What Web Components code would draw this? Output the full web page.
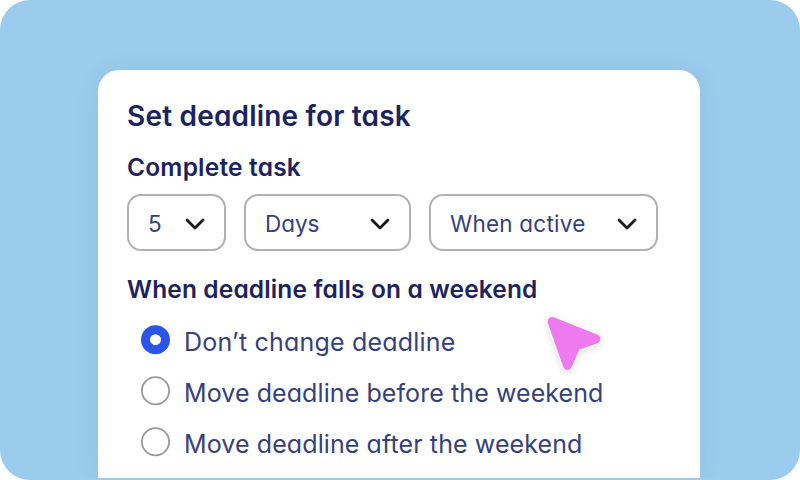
<!DOCTYPE html>
<html lang="en">
<head>
<meta charset="utf-8">
<title>Set deadline for task</title>
<style>
    body {
        margin: 0;
        background: #fff;
        font-family: Inter, "Liberation Sans", sans-serif;
        font-feature-settings: "cv11";
    }
</style>
</head>
<body>

<template id="page-template">
    <style>
        :host {
            display: flex;
            justify-content: center;
            position: relative;
            box-sizing: border-box;
            width: 800px;
            height: 480px;
            padding: 70px 2px 2px 0;
            border-radius: 30px;
            background: #9bcbed;
            overflow: hidden;
        }
    </style>
    <slot></slot>
</template>

<template id="card-template">
    <style>
        :host {
            display: block;
            box-sizing: border-box;
            width: 602px;
            height: 408px;
            padding: 29px 29px 0;
            border-radius: 21px 21px 0 0;
            background: #fff;
            box-shadow: 0 2px 24px rgba(60, 90, 140, .1);
            clip-path: inset(-40px -40px 0);
        }
        .selects {
            display: flex;
            gap: 18px;
            margin-top: 10px;
        }
        .radios {
            display: flex;
            flex-direction: column;
            gap: 15px;
            margin: 18.8px 0 0 14px;
        }
    </style>
    <slot name="title"></slot>
    <slot name="when"></slot>
    <div class="selects"><slot name="select"></slot></div>
    <slot name="weekend"></slot>
    <div class="radios"><slot></slot></div>
</template>

<template id="line-template">
    <style>
        :host {
            display: block;
            white-space: nowrap;
            line-height: var(--line, 34px);
        }
        span { display: inline-block; }
    </style>
    <span><slot></slot></span>
</template>

<template id="select-template">
    <style>
        :host {
            display: flex;
            align-items: center;
            justify-content: space-between;
            box-sizing: border-box;
            height: 57px;
            padding: 3px 18px 0 19px;
            border: 2px solid #b1b1b1;
            border-radius: 14px;
            color: #36407c;
            font-size: 22.5px;
        }
        svg { display: block; }
    </style>
    <slot></slot>
    <svg width="22" height="14" viewBox="0 0 22 14" fill="none" stroke="#171717" stroke-width="2.8" stroke-linecap="round" stroke-linejoin="round">
        <path d="M3 3l8 8 8-8"/>
    </svg>
</template>

<template id="radio-template">
    <style>
        :host {
            display: flex;
            gap: 14px;
            height: 36px;
            color: #36407c;
            font-size: 25px;
        }
        svg { display: block; flex: none; }
        circle { fill: #fff; stroke: #999; stroke-width: 1.8; r: 13.6px; }
        :host([checked]) circle { stroke: #2b54e8; stroke-width: 9; r: 10px; }
    </style>
    <svg width="29" height="30" viewBox="0 0 29 30"><circle cx="14.5" cy="14.7" r="13.6"/></svg>
    <slot></slot>
</template>

<template id="cursor-template">
    <style>
        :host {
            position: absolute;
            left: 540px;
            top: 310px;
            filter: drop-shadow(0 2px 3px rgba(0, 0, 0, .12));
        }
        svg { display: block; }
    </style>
    <svg width="70" height="70" viewBox="0 0 70 70" stroke-linejoin="round">
        <path d="M12 11.5L56 29 36 36 27.5 55.5z" stroke="#fff" stroke-width="12" fill="#fff"/>
        <path d="M12 11.5L56 29 36 36 27.5 55.5z" stroke="#ed7bee" stroke-width="9" fill="#ed7bee"/>
    </svg>
</template>

<deadline-page>
    <deadline-card>
        <fit-line slot="title" fit="284" style="font-size: 28px; font-weight: 600; color: #1b2360">Set deadline for task</fit-line>
        <fit-line slot="when" fit="174" style="font-size: 24.5px; font-weight: 600; color: #1b2360; margin-top: 17px">Complete task</fit-line>
        <select-box slot="select" style="width: 99px"><fit-line fit="14">5</fit-line></select-box>
        <select-box slot="select" style="width: 167px"><fit-line fit="54.5">Days</fit-line></select-box>
        <select-box slot="select" style="width: 228.5px"><fit-line fit="135.5">When active</fit-line></select-box>
        <fit-line slot="weekend" fit="410.5" style="font-size: 24.5px; font-weight: 600; color: #1b2360; margin-top: 21px">When deadline falls on a weekend</fit-line>
        <radio-row checked><fit-line fit="271.5">Don’t change deadline</fit-line></radio-row>
        <radio-row><fit-line fit="419.5">Move deadline before the weekend</fit-line></radio-row>
        <radio-row><fit-line fit="398.5">Move deadline after the weekend</fit-line></radio-row>
    </deadline-card>
    <pointer-cursor></pointer-cursor>
</deadline-page>

<script>
    class TemplateElement extends HTMLElement {
        constructor() {
            super()
            const template = document.querySelector(`#${this.constructor.template}`)
            this.attachShadow({mode: 'open'})
            this.shadowRoot.appendChild(document.importNode(template.content, true))
        }
    }

    window.customElements.define('deadline-page', class extends TemplateElement {
        static get template() { return 'page-template' }
    })
    window.customElements.define('deadline-card', class extends TemplateElement {
        static get template() { return 'card-template' }
    })
    window.customElements.define('select-box', class extends TemplateElement {
        static get template() { return 'select-template' }
    })
    window.customElements.define('radio-row', class extends TemplateElement {
        static get template() { return 'radio-template' }
    })
    window.customElements.define('pointer-cursor', class extends TemplateElement {
        static get template() { return 'cursor-template' }
    })

    // One line of text, tracked to the width given in "fit"
    window.customElements.define('fit-line', class extends TemplateElement {
        static get template() { return 'line-template' }
        connectedCallback() {
            const span = this.shadowRoot.querySelector('span')
            const count = this.textContent.length
            const width = span.getBoundingClientRect().width
            if (count > 1) {
                span.style.letterSpacing = `${(this.getAttribute('fit') - width) / count}px`
            }
        }
    })
</script>
</body>
</html>
